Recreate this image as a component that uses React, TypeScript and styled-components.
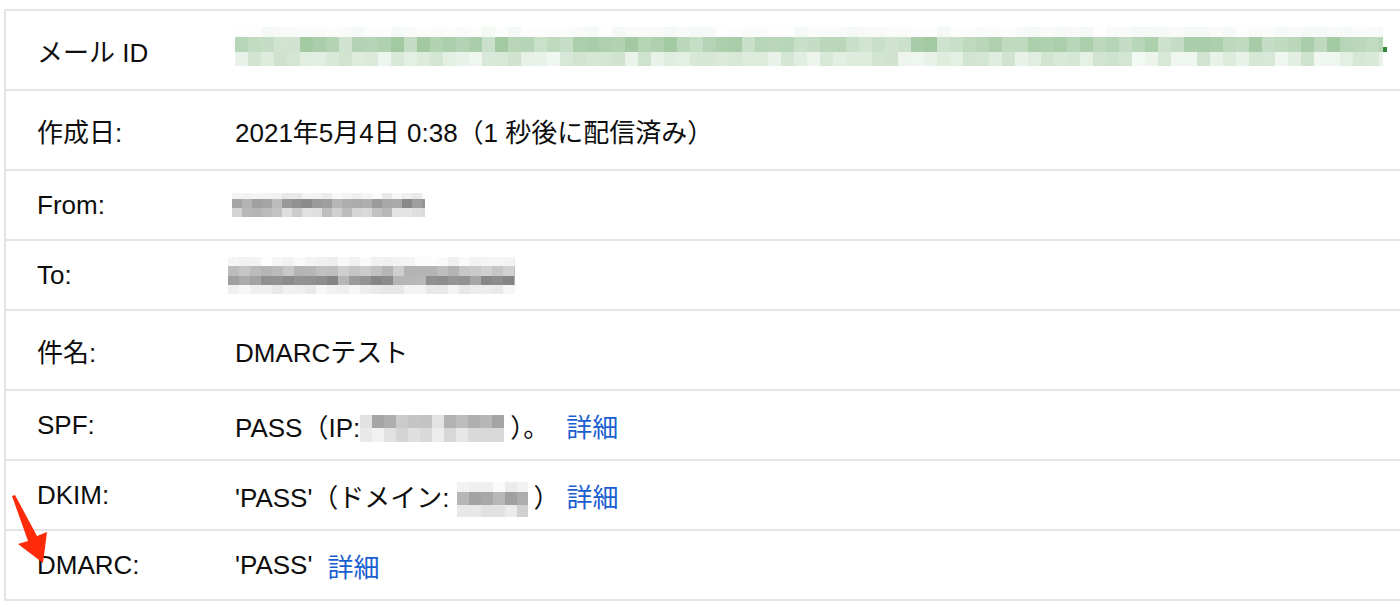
import React from "react";
import styled, { createGlobalStyle } from "styled-components";

const GlobalStyle = createGlobalStyle`
  html, body {
    margin: 0;
    padding: 0;
    background: #fff;
    overflow: hidden;
  }
  body {
    font-family: "Liberation Sans", "Noto Sans CJK JP", sans-serif;
    color: #0d0d0d;
  }
`;

const Page = styled.div`
  position: relative;
  width: 1400px;
  height: 607px;
`;

const Table = styled.div`
  margin: 9px 0 0 4px;
  border-top: 2px solid #e4e4e4;
  border-left: 2px solid #e4e4e4;
`;

const Row = styled.div<{ $tall?: boolean }>`
  box-sizing: border-box;
  display: grid;
  grid-template-columns: 229px 1fr;
  align-items: center;
  height: ${(p) => (p.$tall ? 80 : 70)}px;
  border-bottom: 2px solid #e4e4e4;
`;

const Label = styled.div`
  padding-left: 31px;
  font-size: 26px;
  white-space: nowrap;
`;

const Value = styled.div`
  display: flex;
  align-items: center;
  font-size: 26px;
  white-space: pre;
`;

const Link = styled.a<{ $gap?: number }>`
  color: #1a5fd1;
  text-decoration: none;
  margin-left: ${(p) => p.$gap ?? 10}px;
`;

const Blur = styled.svg<{ $shift?: number; $drop?: number }>`
  display: block;
  flex-shrink: 0;
  margin-left: ${(p) => p.$shift ?? 0}px;
  margin-top: ${(p) => p.$drop ?? 0}px;
`;

const Arrow = styled.svg`
  position: absolute;
  left: 0;
  top: 480px;
`;

const Inline = styled.span`
  display: inline-block;
`;

type Band = { h: number; min: number; max: number };

const rng = (seed: number) => {
  let a = seed;
  return () => {
    a |= 0;
    a = (a + 0x6d2b79f5) | 0;
    let t = Math.imul(a ^ (a >>> 15), 1 | a);
    t = (t + Math.imul(t ^ (t >>> 7), 61 | t)) ^ t;
    return ((t ^ (t >>> 14)) >>> 0) / 4294967296;
  };
};

// mosaic used to hide addresses / ids in the screenshot
const Pixelated = ({
  width,
  cell,
  bands,
  color,
  seed,
  shift,
  drop,
  children,
}: {
  width: number;
  cell: number;
  bands: Band[];
  color: string;
  seed: number;
  shift?: number;
  drop?: number;
  children?: React.ReactNode;
}) => {
  const rand = rng(seed);
  const height = bands.reduce((s, b) => s + b.h, 0);
  const rects: React.ReactNode[] = [];
  let y = 0;
  bands.forEach((b, bi) => {
    for (let x = 0; x < width; x += cell) {
      const o = b.min + (b.max - b.min) * rand();
      rects.push(
        <rect
          key={`${bi}-${x}`}
          x={x}
          y={y}
          width={Math.min(cell, width - x)}
          height={b.h}
          fill={color}
          fillOpacity={o}
        />
      );
    }
    y += b.h;
  });
  return (
    <Blur width={width + 6} height={height} $shift={shift} $drop={drop}>
      {rects}
      {children}
    </Blur>
  );
};

export default function App() {
  return (
    <>
      <GlobalStyle />
      <Page>
        <Table>
          <Row $tall>
            <Label>メール ID</Label>
            <Value>
              <Pixelated
                width={1148}
                cell={13}
                color="rgb(100,165,100)"
                seed={7}
                drop={-7}
                bands={[
                  { h: 10, min: 0.01, max: 0.07 },
                  { h: 15, min: 0.3, max: 0.6 },
                  { h: 14, min: 0.08, max: 0.32 },
                ]}
              >
                <rect x={1148} y={20} width={4} height={5} fill="#2f8a3c" />
              </Pixelated>
            </Value>
          </Row>
          <Row $tall>
            <Label>作成日:</Label>
            <Value>2021年5月4日 0:38（1 秒後に配信済み）</Value>
          </Row>
          <Row>
            <Label>From:</Label>
            <Value>
              <Pixelated
                width={193}
                cell={10}
                color="rgb(80,80,80)"
                seed={21}
                shift={-3}
                bands={[
                  { h: 6, min: 0.02, max: 0.14 },
                  { h: 9, min: 0.35, max: 0.7 },
                  { h: 9, min: 0.15, max: 0.45 },
                ]}
              />
            </Value>
          </Row>
          <Row>
            <Label>To:</Label>
            <Value>
              <Pixelated
                width={287}
                cell={11}
                color="rgb(80,80,80)"
                seed={33}
                shift={-7}
                bands={[
                  { h: 9, min: 0.01, max: 0.1 },
                  { h: 10, min: 0.25, max: 0.45 },
                  { h: 9, min: 0.4, max: 0.7 },
                  { h: 9, min: 0.04, max: 0.14 },
                ]}
              />
            </Value>
          </Row>
          <Row $tall>
            <Label>件名:</Label>
            <Value>DMARCテスト</Value>
          </Row>
          <Row>
            <Label>SPF:</Label>
            <Value>
              <Inline>PASS（IP:</Inline>
              <Pixelated
                width={144}
                cell={12}
                color="rgb(80,80,80)"
                seed={45}
                drop={6}
                bands={[
                  { h: 13, min: 0.15, max: 0.55 },
                  { h: 14, min: 0.06, max: 0.25 },
                ]}
              />
              <Inline>）。</Inline>
              <Link href="#" $gap={17}>
                詳細
              </Link>
            </Value>
          </Row>
          <Row>
            <Label>DKIM:</Label>
            <Value>
              <Inline>'PASS'（ドメイン:</Inline>
              <Pixelated
                width={71}
                cell={12}
                color="rgb(80,80,80)"
                seed={58}
                shift={7}
                drop={8}
                bands={[
                  { h: 10, min: 0.03, max: 0.12 },
                  { h: 13, min: 0.3, max: 0.55 },
                  { h: 12, min: 0.1, max: 0.3 },
                ]}
              />
              <Inline>）</Inline>
              <Link href="#" $gap={7}>
                詳細
              </Link>
            </Value>
          </Row>
          <Row>
            <Label>DMARC:</Label>
            <Value>
              <Inline>'PASS'</Inline>
              <Link href="#" $gap={15}>
                詳細
              </Link>
            </Value>
          </Row>
        </Table>
        <Arrow width="60" height="80" viewBox="0 480 60 80">
          <polygon
            points="12,487 15,486 37,527 47,523 43,554 18,535 28,532"
            fill="#ff2a0a"
          />
        </Arrow>
      </Page>
    </>
  );
}
